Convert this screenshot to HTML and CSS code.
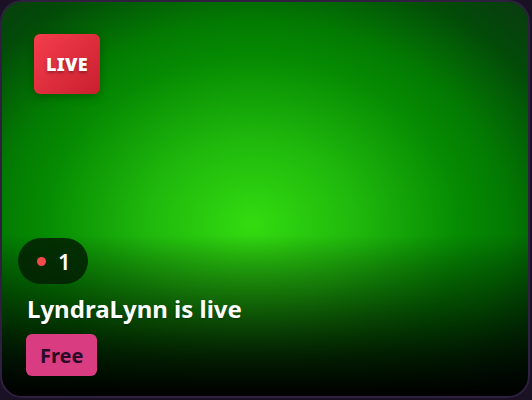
FILE: index.html
```html
<!DOCTYPE html>
<html>
<head>
<meta charset="utf-8">
<link rel="stylesheet" href="styles.css">
</head>
<body>
<div class="card">
  <div class="top">
    <div class="live">LIVE</div>
  </div>
  <div class="bottom">
    <div class="viewers"><span class="dot"></span><span class="count">1</span></div>
    <div class="title">LyndraLynn is live</div>
    <div class="price">Free</div>
  </div>
</div>
</body>
</html>
```
FILE: styles.css
```css
html, body {
  margin: 0;
  padding: 0;
  background: #1a1124;
  font-family: "Noto Sans", "Open Sans", sans-serif;
}
.card {
  box-sizing: border-box;
  width: 530px;
  height: 398px;
  border: 2px solid #2f2040;
  border-radius: 22px;
  overflow: hidden;
  display: flex;
  flex-direction: column;
  justify-content: space-between;
  background:
    linear-gradient(to bottom, rgba(0,0,0,0) 0%, rgba(0,0,0,0) 59%, rgba(0,0,0,0.2) 66%, rgba(0,0,0,0.45) 76%, rgba(0,0,0,0.8) 90%, rgba(0,0,0,1) 100%),
    radial-gradient(ellipse 300px 240px at 250px 222px, #33dc10 0%, #1fb80c 35%, #058a02 70%, #037a02 85%, #024b08 110%, #0d3313 140%);
}
.top {
  padding: 32px;
}
.live {
  width: 66px;
  height: 60px;
  border-radius: 6px;
  background: linear-gradient(135deg, #f53d4d, #c81f2e);
  box-shadow: 0 3px 8px rgba(0,0,0,0.25);
  color: #fff;
  font-weight: 900;
  font-size: 18px;
  letter-spacing: 0.3px;
  display: flex;
  align-items: center;
  justify-content: center;
  text-shadow: 0 2px 3px rgba(0,0,0,0.3);
}
.bottom {
  padding: 0 0 20px 16px;
  display: flex;
  flex-direction: column;
  align-items: flex-start;
}
.viewers {
  height: 46px;
  width: 70px;
  box-sizing: border-box;
  border-radius: 23px;
  background: rgba(2, 30, 2, 0.85);
  display: flex;
  align-items: center;
  padding-left: 19px;
  gap: 12px;
}
.dot {
  width: 9px;
  height: 9px;
  border-radius: 50%;
  background: #f24a4a;
}
.count {
  color: #fff;
  font-size: 22px;
  font-weight: 600;
}
.title {
  margin: 9px 0 0 9px;
  color: #fff;
  font-size: 24px;
  font-weight: 700;
  line-height: 32px;
  text-shadow: 0 1px 2px rgba(0,0,0,0.3);
}
.price {
  margin: 9px 0 0 8px;
  height: 42px;
  padding: 0 14px;
  border-radius: 6px;
  background: #da3c82;
  color: #2a0b27;
  font-size: 20px;
  font-weight: 700;
  display: flex;
  align-items: center;
}
```
